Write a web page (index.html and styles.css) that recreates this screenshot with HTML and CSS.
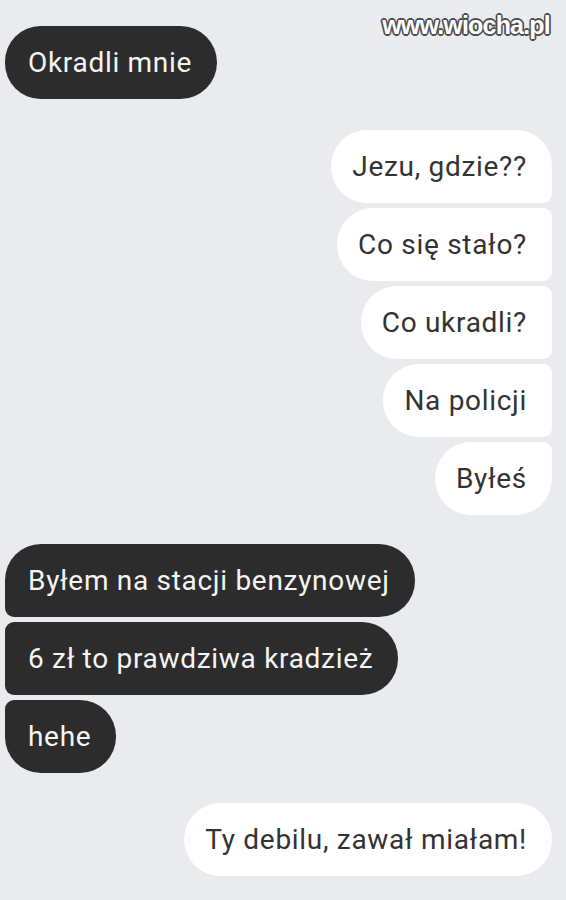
FILE: index.html
```html
<!DOCTYPE html>
<html lang="pl">
<head>
<meta charset="utf-8">
<title>Rozmowa</title>
<link rel="stylesheet" href="styles.css">
</head>
<body>
<div class="watermark">www.wiocha.pl</div>
<main class="chat">
  <div class="group them first-group">
    <div class="bubble solo">Okradli mnie</div>
  </div>
  <div class="group me g2">
    <div class="bubble">Jezu, gdzie??</div>
    <div class="bubble">Co się stało?</div>
    <div class="bubble">Co ukradli?</div>
    <div class="bubble">Na policji</div>
    <div class="bubble">Byłeś</div>
  </div>
  <div class="group them g3">
    <div class="bubble">Byłem na stacji benzynowej</div>
    <div class="bubble">6 zł to prawdziwa kradzież</div>
    <div class="bubble">hehe</div>
  </div>
  <div class="group me g4">
    <div class="bubble solo">Ty debilu, zawał miałam!</div>
  </div>
</main>
</body>
</html>
```
FILE: styles.css
```css
* { box-sizing: border-box; }
html, body {
  margin: 0;
  padding: 0;
  background: #e9ebee;
  height: 900px;
  overflow: hidden;
}
body {
  font-family: Roboto, "Noto Sans", "Liberation Sans", sans-serif;
  position: relative;
}
.watermark {
  position: absolute;
  top: 13px;
  right: 16px;
  font-family: "Liberation Sans", Arial, sans-serif;
  font-weight: bold;
  font-size: 25px;
  line-height: 25px;
  letter-spacing: -0.8px;
  color: #ffffff;
  text-shadow:
    1.6px 0 0 #505050, -1.6px 0 0 #505050, 0 1.6px 0 #505050, 0 -1.6px 0 #505050,
    1.2px 1.2px 0 #505050, -1.2px 1.2px 0 #505050, 1.2px -1.2px 0 #505050, -1.2px -1.2px 0 #505050;
}
.chat {
  display: flex;
  flex-direction: column;
  padding: 26px 14px 0 5px;
}
.group {
  display: flex;
  flex-direction: column;
  gap: 5px;
}
.them { align-items: flex-start; }
.me { align-items: flex-end; }
.g2 { margin-top: 31px; }
.g3 { margin-top: 29px; }
.g4 { margin-top: 30px; }
.bubble {
  height: 73px;
  line-height: 73px;
  padding: 0 25px 0 23px;
  font-size: 28px;
  letter-spacing: 0.7px;
  white-space: nowrap;
}
.them .bubble {
  background: #2c2c2c;
  color: #f4f4f4;
  border-radius: 9px 36px 36px 9px;
}
.them .bubble:first-child { border-top-left-radius: 36px; }
.them .bubble:last-child { border-bottom-left-radius: 36px; }
.me .bubble {
  background: #ffffff;
  color: #333333;
  border-radius: 36px 9px 9px 36px;
  padding: 0 25px 0 21px;
}
.me .bubble:first-child { border-top-right-radius: 36px; }
.me .bubble:last-child { border-bottom-right-radius: 36px; }
.bubble.solo { border-radius: 37px; }
```
